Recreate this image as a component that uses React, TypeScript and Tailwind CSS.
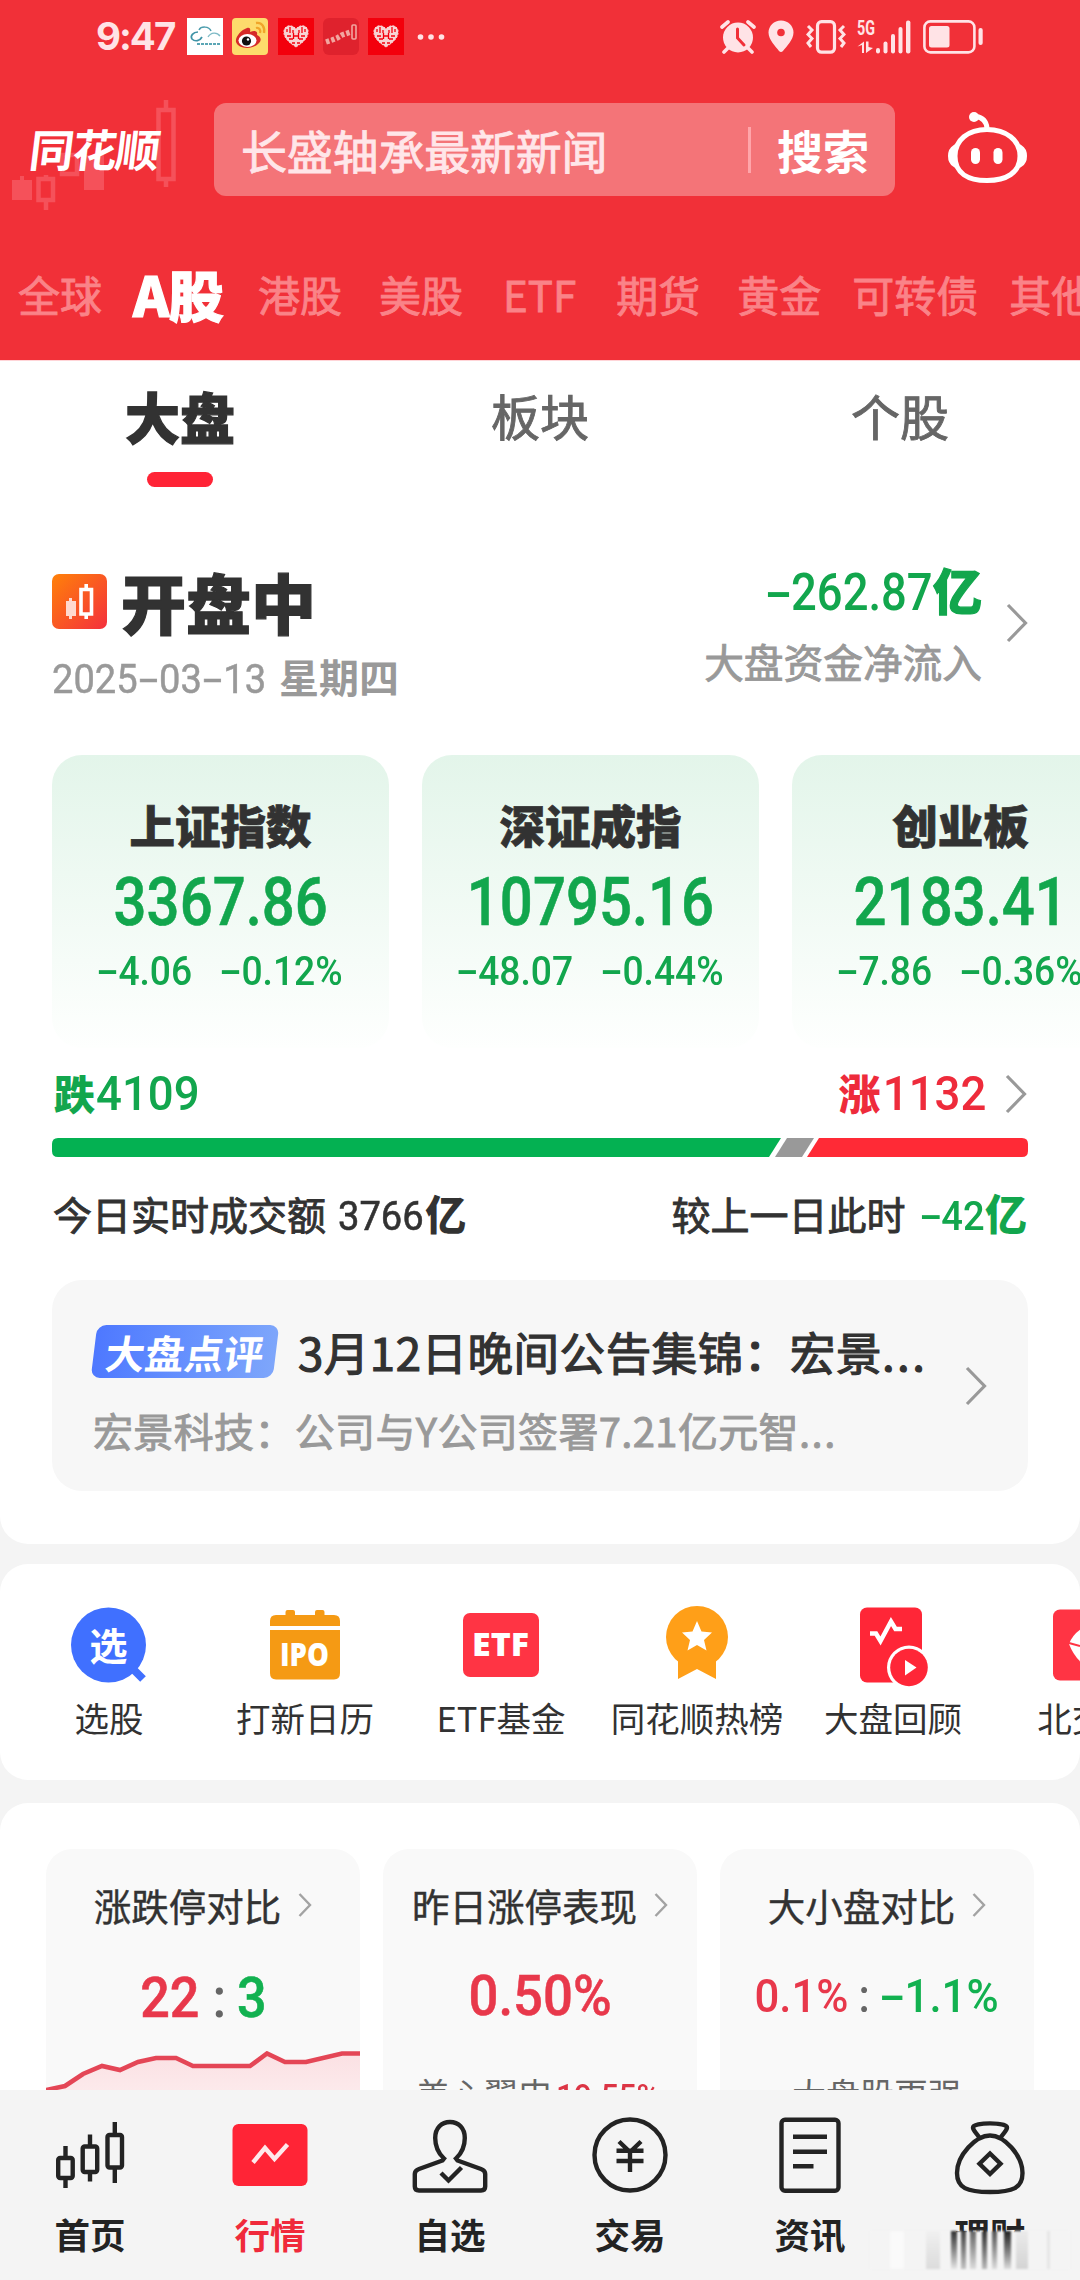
import type { ReactNode } from "react";
import clsx from "clsx";

// 中文字体只有常规和粗体两档，用描边补出中黑、特黑
const MEDIUM = "font-normal [-webkit-text-stroke:0.9px_currentColor]";
const HEAVY = "font-black [-webkit-text-stroke:1.2px_currentColor]";

/** 数字：Roboto 横向略压窄，负号占一个数字宽 */
function Num({
  children,
  className,
  scale = "scale-x-[0.93]",
}: {
  children: string;
  className?: string;
  scale?: string;
}) {
  return (
    <span
      className={clsx(
        "inline-block whitespace-pre font-['Roboto','Noto_Sans_CJK_SC',sans-serif]",
        scale,
        className,
      )}
    >
      {children.split(/(-)/).map((part, i) =>
        part === "-" ? (
          <span key={i} className="inline-block w-[0.56em] text-center">
            <span className="inline-block scale-x-[1.8]">-</span>
          </span>
        ) : (
          part
        ),
      )}
    </span>
  );
}

function Chevron({ small = false }: { small?: boolean }) {
  return small ? (
    <svg width="14" height="26" viewBox="0 0 14 26" fill="none" className="shrink-0">
      <path d="M1.5 2 L12 13 L1.5 24" stroke="#a3a3a3" strokeWidth="2.4" />
    </svg>
  ) : (
    <svg width="22" height="40" viewBox="0 0 22 40" fill="none" className="shrink-0">
      <path d="M2 2 L19.5 20 L2 38" stroke="#999" strokeWidth="3.2" />
    </svg>
  );
}

function HeartApp() {
  return (
    <svg width="36" height="37" viewBox="0 0 36 37">
      <rect width="36" height="37" fill="#f3000c" />
      <path
        d="M18 29 C10 24 5 19 6 12.5 C7 7 14 6 18 11 C22 6 29 7 30 12.5 C31 19 26 24 18 29Z"
        fill="#f8d3d3"
        stroke="#f8d3d3"
        strokeDasharray="2 1.4"
      />
      <path
        d="M9 11 v3 M12 9 v6 M15 12 v3 M21 12 v3 M24 9 v6 M27 11 v3 M9 18 h4 M23 18 h4 M11 21 h4 M21 21 h4 M14 25 h3 M19 25 h3 M15.500 15 v6 M20.500 15 v6 M16 18 h4"
        stroke="#f3000c"
        strokeWidth="1.3"
      />
    </svg>
  );
}

function StatusBar() {
  return (
    <div className="flex h-[73px] items-center pl-[96px] text-[#ffe3e6]">
      <span className="w-[91px] font-['Inter',sans-serif] text-[38.5px] leading-none font-bold tracking-[-2px]">
        9:47
      </span>
      <div className="flex w-[217px] shrink-0 justify-between">
        <svg width="36" height="37" viewBox="0 0 36 37" fill="none">
          <rect width="36" height="37" fill="#fff" />
          <path d="M12 12 C14 8 22 8 24 13" stroke="#4d9dad" strokeWidth="1.5" />
          <path d="M11 14 C6 14 3 18 5 21 C8 24 13 23 15 19" stroke="#3f93a6" strokeWidth="1.7" />
          <path d="M21 19 C24 14 30 14 33 18" stroke="#7ebac6" strokeWidth="1.4" />
          <path d="M10 26 h23" stroke="#5ba6b5" strokeWidth="1.8" strokeDasharray="3 1" />
        </svg>
        <svg width="36" height="37" viewBox="0 0 36 37">
          <rect width="36" height="37" rx="4" fill="#fddb6c" />
          <path d="M24 5 C30 4 33 9 32 15" stroke="#f0a52a" strokeWidth="2.4" fill="none" />
          <path d="M24 10 C27 9 29 12 28 15" stroke="#f0a52a" strokeWidth="2.2" fill="none" />
          <path
            d="M15 10 C9 12 3 19 4 24 C6 31 20 32 26 26 C31 22 28 18 25 17 C26 13 23 12 18 14 C19 10 17 9 15 10Z"
            fill="#d62a28"
          />
          <ellipse cx="15.500" cy="22.500" rx="9" ry="6.500" fill="#fff" />
          <circle cx="14.500" cy="23" r="4.600" fill="#111" />
          <circle cx="16" cy="21.500" r="1.200" fill="#fff" />
        </svg>
        <HeartApp />
        <svg width="36" height="37" viewBox="0 0 36 37" fill="none">
          <rect width="36" height="37" rx="6" fill="#df222d" />
          <path d="M3 24 L9 22 L14 20 L19 17 L28 14" stroke="#f2a6a0" strokeWidth="5.500" strokeDasharray="3.500 2" />
          <rect x="29" y="7" width="4" height="14" rx="1" stroke="#f2a6a0" strokeWidth="1.600" />
        </svg>
        <HeartApp />
      </div>
      <svg width="28" height="8" viewBox="0 0 28 8" fill="currentColor" className="ml-[13px] shrink-0">
        <circle cx="3.500" cy="4" r="2.800" />
        <circle cx="14" cy="4" r="2.800" />
        <circle cx="24.500" cy="4" r="2.800" />
      </svg>

      <svg width="36" height="34" viewBox="0 0 36 34" fill="none" className="ml-[275px] shrink-0">
        <circle cx="18" cy="17.500" r="15" fill="currentColor" />
        <path d="M2 7 L8 2 M34 7 L28 2 M8 28 L4 32 M28 28 L32 32" stroke="currentColor" strokeWidth="3.600" strokeLinecap="round" />
        <path d="M17.500 9 V18 L24 25" stroke="#f13038" strokeWidth="3" strokeLinecap="round" />
      </svg>
      <svg width="26" height="33" viewBox="0 0 26 33" className="ml-[12px] shrink-0">
        <path
          d="M13 0.500 C6 0.500 0.500 6 0.500 12.500 C0.500 20 8 27 11 31 Q13 33 15 31 C18 27 25.500 20 25.500 12.500 C25.500 6 20 0.500 13 0.500Z"
          fill="currentColor"
        />
        <circle cx="13" cy="12.500" r="3.800" fill="#f13038" />
      </svg>
      <svg width="40" height="34" viewBox="0 0 40 34" fill="none" stroke="currentColor" className="ml-[12px] shrink-0">
        <rect x="11.500" y="1.700" width="17" height="30.500" rx="4" strokeWidth="3.200" />
        <path d="M2 6 L6 10 L2 14.500 L6 18.500 L2 23 L5 27 M38 6 L34 10 L38 14.500 L34 18.500 L38 23 L35 27" strokeWidth="3" />
      </svg>
      <svg width="54" height="42" viewBox="0 -4 54 42" className="ml-[11px] shrink-0" fill="currentColor">
        <text
          x="0"
          y="15"
          fontFamily="Roboto, sans-serif"
          fontSize="20"
          fontWeight="700"
          textLength="18"
          lengthAdjust="spacingAndGlyphs"
        >
          5G
        </text>
        <path d="M5 33 V25 L0.500 26.500 L7 21.500 V33Z M9 21.500 V33 L16 28 L11.500 27 V21.500Z" />
        <rect x="19" y="28" width="4" height="5.500" rx="2" />
        <rect x="26.500" y="21.500" width="4" height="12" rx="2" />
        <rect x="34" y="14" width="4" height="19.500" rx="2" />
        <rect x="41.500" y="7" width="4" height="26.500" rx="2" />
        <rect x="49" y="0.500" width="4.400" height="33" rx="2" />
      </svg>
      <svg width="61" height="34" viewBox="0 0 61 34" className="ml-[12px] shrink-0" fill="none">
        <rect x="1.400" y="1.400" width="50" height="31" rx="6" stroke="currentColor" strokeWidth="2.600" />
        <rect x="6" y="6" width="20.500" height="21.500" rx="2.500" fill="currentColor" />
        <rect x="55.500" y="8" width="4.200" height="17" rx="2" fill="currentColor" />
      </svg>
    </div>
  );
}

const MARKETS = [
  { label: "全球", gap: "ml-[18px]" },
  { label: "A股", gap: "ml-[31px]", active: true },
  { label: "港股", gap: "ml-[31px]" },
  { label: "美股", gap: "ml-[37px]" },
  { label: "ETF", gap: "ml-[40px]" },
  { label: "期货", gap: "ml-[40px]" },
  { label: "黄金", gap: "ml-[37px]" },
  { label: "可转债", gap: "ml-[31px]" },
  { label: "其他", gap: "ml-[31px]" },
];

function Header() {
  return (
    <header className="h-[361px] border-b border-[#ffd5d8] bg-[#f13038]">
      <StatusBar />
      <div className="relative mt-[30px] flex h-[93px] items-center">
        <svg width="190" height="120" viewBox="0 0 190 120" className="absolute top-[-8px] left-0" fill="#f5515a">
          <path d="M12 85 H20 V81 H24 V85 H32 V105 H12Z" />
          <path d="M84 60 H104 V95 H84Z" />
          <g fill="none" stroke="#f5515a" strokeWidth="4.500">
            <path d="M38.500 84 H53 V105 H38.500Z M46 80 V84 M46 105 V115" />
            <path d="M62 60 H77 V79 H62Z" />
            <path d="M158.500 15 H173.500 V84 H158.500Z M166 5 V15 M166 84 V92" />
          </g>
        </svg>
        <div className="relative w-[214px] pl-[30px]">
          <span className="relative top-[-2px] inline-block origin-left -skew-x-[7deg] text-[44.5px] leading-[60px] font-bold tracking-[-1.4px] text-white">
            同花顺
          </span>
        </div>
        <div className="flex h-[93px] w-[681px] items-center rounded-[12px] bg-[#f47478] pr-[26px] pl-[27px] text-[46px] leading-[60px]">
          <span className={clsx("relative top-[-1px] flex-1 tracking-[-0.2px] text-[#ffe6e9]", MEDIUM)}>
            长盛轴承最新新闻
          </span>
          <span className="h-[46px] w-[3px] bg-[#ffa5aa]" />
          <span className="relative top-[-1px] ml-[26px] font-bold text-white">搜索</span>
        </div>
        <svg width="80" height="74" viewBox="0 0 80 74" fill="none" className="mt-[-4px] ml-[52px]">
          <path
            d="M40 18.500 C59 18.500 73 29 73 45 C73 62 59 69.500 40 69.500 C21 69.500 8 62 8 45 C8 29 21 18.500 40 18.500Z"
            stroke="#fff"
            strokeWidth="5"
          />
          <path d="M7 35 Q2 38 2 45 Q2 52 7 55Z M74 35 Q79 38 79 45 Q79 52 74 55Z" fill="#fff" stroke="#fff" strokeWidth="2" />
          <path d="M40 17 Q39 7 29 5.500" stroke="#fff" strokeWidth="5" />
          <circle cx="27" cy="6" r="5" fill="#fff" />
          <rect x="24" y="37" width="9" height="16" rx="4.500" fill="#fff" />
          <rect x="46.500" y="37" width="9" height="16" rx="4.500" fill="#fff" />
        </svg>
      </div>
      <nav className="mt-[47px] flex h-[100px] items-center overflow-hidden whitespace-nowrap">
        {MARKETS.map((m) => (
          <span
            key={m.label}
            className={clsx(
              "shrink-0",
              m.gap,
              m.active ? "w-[94px] text-[55px] tracking-[-0.5px] text-white" : "text-[42px] text-[#fa8388]",
              m.active ? HEAVY : MEDIUM,
            )}
          >
            {m.label}
          </span>
        ))}
      </nav>
    </header>
  );
}

function SubTabs() {
  return (
    <div className="grid h-[126px] grid-cols-3 text-center">
      <div className="flex flex-col items-center">
        <span className={clsx("h-[111px] text-[55px] leading-[109px] text-[#323232]", HEAVY)}>大盘</span>
        <span className="h-[15px] w-[66px] rounded-full bg-[#ff2436]" />
      </div>
      <span className={clsx("text-[49px] leading-[108px] text-[#666]", MEDIUM)}>板块</span>
      <span className={clsx("text-[49px] leading-[108px] text-[#666]", MEDIUM)}>个股</span>
    </div>
  );
}

const INDICES = [
  { name: "上证指数", value: "3367.86", diff: "-4.06", pct: "-0.12%" },
  { name: "深证成指", value: "10795.16", diff: "-48.07", pct: "-0.44%" },
  { name: "创业板", value: "2183.41", diff: "-7.86", pct: "-0.36%" },
];

function MarketPanel() {
  return (
    <section className="h-[1183px] overflow-hidden rounded-b-[28px] bg-white pl-[52px]">
      <div className="-ml-[52px]">
        <SubTabs />
      </div>

      <div className="mt-[70px] flex h-[156px] justify-between pr-[52px]">
        <div>
          <div className="flex h-[88px] items-center">
            <svg width="55" height="55" viewBox="0 0 55 55">
              <defs>
                <linearGradient id="open" x1="0" y1="0" x2="1" y2="1">
                  <stop offset="0" stopColor="#ff8109" />
                  <stop offset="1" stopColor="#f4303d" />
                </linearGradient>
              </defs>
              <rect width="55" height="55" rx="7" fill="url(#open)" />
              <path d="M14 27 H17 V24 H20 V27 H24 V42 H20 V45 H17 V42 H14Z" fill="#ffd9cf" />
              <path d="M29 15.500 H39.500 V40 H29Z M34.200 10 V15 M34.200 40 V45" stroke="#fff" strokeWidth="3.600" fill="none" />
            </svg>
            <span className={clsx("ml-[14px] text-[65px] leading-[88px] text-[#323232]", HEAVY)}>开盘中</span>
          </div>
          <div className="mt-[6px] flex items-baseline text-[#999]">
            <Num className="w-[227px] origin-left text-[41px] leading-[50px] [-webkit-text-stroke:0.5px_currentColor]">
              2025-03-13
            </Num>
            <span className="text-[40px] leading-[50px] font-bold">星期四</span>
          </div>
        </div>
        <div className="flex items-center">
          <div className="mr-[24px] h-full text-right">
            <div className="flex h-[66px] items-baseline justify-end text-[#12a64d]">
              <Num className="origin-right text-[51px] leading-[64px] font-medium" scale="scale-x-[0.89]">
                -262.87
              </Num>
              <span className={clsx("text-[49px] leading-[64px]", HEAVY)}>亿</span>
            </div>
            <div className={clsx("mt-[10px] text-[39.700px] leading-[56px] text-[#999]", MEDIUM)}>大盘资金净流入</div>
          </div>
          <div className="mb-[24px]">
            <Chevron />
          </div>
        </div>
      </div>

      <div className="mt-[42px] flex gap-[33px]">
        {INDICES.map((item) => (
          <div
            key={item.name}
            className="flex h-[293px] w-[337px] shrink-0 flex-col items-center rounded-[30px] bg-linear-to-b from-[#e3f5ea] to-[#fefffe] pt-[39px] text-[#12a64d]"
          >
            <span className="text-[45.500px] leading-[60px] font-black text-[#323232] [-webkit-text-stroke:0.8px_currentColor]">
              {item.name}
            </span>
            <Num
              className="mt-[8px] text-[66px] leading-[82px] font-medium [-webkit-text-stroke:0.6px_currentColor]"
              scale="scale-x-[0.88]"
            >
              {item.value}
            </Num>
            <div className="mt-[2px] flex gap-[20px]">
              <Num className="text-[40px] leading-[52px] font-medium">{item.diff}</Num>
              <Num className="text-[40px] leading-[52px] font-medium">{item.pct}</Num>
            </div>
          </div>
        ))}
      </div>

      <div className="flex h-[90px] items-center justify-between pt-[2px] pr-[53px]">
        <div className="flex items-baseline text-[#12a64d]">
          <span className="ml-[2px] text-[41px] font-black">跌</span>
          <Num className="ml-[1px] origin-left text-[49px] font-medium">4109</Num>
        </div>
        <div className="flex items-center text-[#ee2b3b]">
          <div className="mr-[19px] flex items-baseline">
            <span className="mr-[-6px] text-[42px] font-black">涨</span>
            <Num className="origin-right text-[49px] font-medium">1132</Num>
          </div>
          <Chevron />
        </div>
      </div>

      <svg width="976" height="19" viewBox="0 0 976 19">
        <path d="M6 0 H729 L717 19 H6 Q0 19 0 13 V6 Q0 0 6 0Z" fill="#04b152" />
        <path d="M735 0 H762 L750 19 H723Z" fill="#999" />
        <path d="M767 0 H970 Q976 0 976 6 V13 Q976 19 970 19 H755Z" fill="#ff2a36" />
      </svg>

      <div className="mt-[23px] flex h-[64px] items-baseline justify-between pr-[53px] text-[39px] leading-[64px] text-[#323232]">
        <div className="flex items-baseline">
          <span className={clsx("ml-[1px] w-[285px]", MEDIUM)}>今日实时成交额</span>
          <Num className="mr-[-5px] origin-left text-[41px] [-webkit-text-stroke:0.6px_currentColor]">3766</Num>
          <span className="text-[41px] font-black">亿</span>
        </div>
        <div className="flex items-baseline">
          <span className={MEDIUM}>较上一日此时</span>
          <Num className="ml-[10px] origin-right text-[41px] font-medium text-[#12a64d]">-42</Num>
          <span className="text-[42px] font-black text-[#12a64d]">亿</span>
        </div>
      </div>

      <div className="mt-[36px] flex h-[211px] w-[976px] items-center rounded-[30px] bg-[#f7f7f7] pr-[41px] pl-[41px]">
        <div className="h-full flex-1 pt-[36px]">
          <div className="flex h-[70px] items-center whitespace-nowrap">
            <span className="ml-[1px] flex h-[53px] w-[182px] -skew-x-[7deg] items-center justify-center rounded-[9px] bg-linear-to-r from-[#4e78ff] to-[#7ea6fb] text-[39.500px] leading-[53px] font-bold text-white">
              大盘点评
            </span>
            <span
              className={clsx(
                "ml-[22px] text-[45.500px] leading-[70px] tracking-[0.55px] text-[#323232] [-webkit-text-stroke:1.2px_currentColor]",
              )}
            >
              3月12日晚间公告集锦：宏景<span className="tracking-[2.5px]">...</span>
            </span>
          </div>
          <div className={clsx("mt-[14px] text-[40px] leading-[60px] tracking-[0.35px] text-[#999]", MEDIUM)}>
            宏景科技：公司与Y公司签署7.21亿元智<span className="tracking-[1.5px]">...</span>
          </div>
        </div>
        <Chevron />
      </div>
    </section>
  );
}

function QuickIcon({ children }: { children: ReactNode }) {
  return (
    <svg width="90" height="90" viewBox="0 0 90 90" className="shrink-0">
      {children}
    </svg>
  );
}

const SHORTCUTS = [
  {
    label: "选股",
    icon: (
      <>
        <circle cx="44.500" cy="45" r="37.500" fill="#4070ff" />
        <path d="M68 68 L79 79" stroke="#4070ff" strokeWidth="8" />
        <text x="44.500" y="59.500" fontSize="38" fontWeight="700" textAnchor="middle" fill="#fff">
          选
        </text>
      </>
    ),
  },
  {
    label: "打新日历",
    icon: (
      <>
        <path d="M25.500 15 V12 Q25.500 10 27.500 10 H33 Q35 10 35 12 V15 H55 V12 Q55 10 57 10 H62.500 Q64.500 10 64.500 12 V15 H74 Q80 15 80 21 V26 H10 V21 Q10 15 16 15Z" fill="#f59a14" />
        <path d="M10 30 H80 V73 Q80 79.500 74 79.500 H16 Q10 79.500 10 73Z" fill="#f59a14" />
        <text x="20" y="66" fontFamily="Open Sans" fontSize="31" fontWeight="800" textLength="49" lengthAdjust="spacingAndGlyphs" fill="#fff">
          IPO
        </text>
      </>
    ),
  },
  {
    label: "ETF基金",
    icon: (
      <>
        <rect x="7" y="13" width="76" height="64" rx="7" fill="#ff3444" />
        <text x="16" y="56" fontFamily="Open Sans" fontSize="31" fontWeight="800" textLength="57" lengthAdjust="spacingAndGlyphs" fill="#fff">
          ETF
        </text>
      </>
    ),
  },
  {
    label: "同花顺热榜",
    icon: (
      <>
        <circle cx="45" cy="37" r="31" fill="#ff9f18" />
        <path d="M26 55 H64 V79 L45 69 L26 79Z" fill="#ff9f18" />
        <path d="M45 21 L49.500 31.500 L60 32.500 L52 40 L54.500 50.500 L45 45 L35.500 50.500 L38 40 L30 32.500 L40.500 31.500Z" fill="#fff" />
      </>
    ),
  },
  {
    label: "大盘回顾",
    icon: (
      <>
        <rect x="12" y="7.500" width="62" height="75" rx="7" fill="#ff2637" />
        <path d="M22 33.500 H28 L32.500 41 L43 21.500 L47.500 29 H54" stroke="#fff" strokeWidth="4.500" fill="none" />
        <circle cx="61" cy="67.500" r="22" fill="#fff" />
        <circle cx="61" cy="67.500" r="18.800" fill="#ff2637" />
        <path d="M57 60 L68.500 67.500 L57 75.500Z" fill="#fff" />
      </>
    ),
  },
  {
    label: "北交所",
    icon: (
      <>
        <rect x="9" y="9.500" width="72" height="71" rx="7" fill="#ff3444" />
        <path d="M25 44 Q30 31 45 25 Q60 31 65 44 Q60 58 45 68 Q31 60 25 44Z" fill="#fff" />
        <path d="M25 43 L36 46" stroke="#ff3444" strokeWidth="2" />
        <circle cx="47" cy="45" r="9" fill="#ff3444" />
      </>
    ),
  },
];

function Shortcuts() {
  return (
    <section className="mt-[20px] flex h-[216px] overflow-hidden rounded-[28px] bg-white pt-[36px] pl-[11px]">
      {SHORTCUTS.map((s) => (
        <div key={s.label} className="flex w-[196px] shrink-0 flex-col items-center">
          <QuickIcon>{s.icon}</QuickIcon>
          <span className="mt-[2px] text-[34.500px] leading-[50px] whitespace-nowrap text-[#323232]">{s.label}</span>
        </div>
      ))}
    </section>
  );
}

function StatCard({ title, children }: { title: string; children: ReactNode }) {
  return (
    <div className="flex h-[300px] w-[314px] shrink-0 flex-col items-center rounded-[26px] bg-[#f9f9f9] pt-[28px]">
      <div className="flex h-[56px] items-center gap-[17px] text-[37.500px] text-[#323232]">
        <span className="[-webkit-text-stroke:0.4px_currentColor]">{title}</span>
        <Chevron small />
      </div>
      {children}
    </div>
  );
}

const TREND = "0,39 19,35 37,23 56,15 74,19 92,11 110,7 130,7 147,15 204,15 221,2.500 239,11 260,11 296,2.500 314,2.500";

function Stats() {
  return (
    <section className="mt-[23px] flex h-[287px] gap-[23px] overflow-hidden rounded-t-[28px] bg-white pt-[46px] pl-[46px]">
      <StatCard title="涨跌停对比">
        <div className="mt-[31px] flex h-[68px] items-baseline text-[56px] leading-[68px]">
          <Num className="font-medium text-[#e8384b] [-webkit-text-stroke:0.6px_currentColor]">22</Num>
          <Num className="mx-[10px] font-medium text-[#666]">:</Num>
          <Num className="font-medium text-[#12b150] [-webkit-text-stroke:0.6px_currentColor]">3</Num>
        </div>
        <svg width="314" height="60" viewBox="0 0 314 60" className="mt-[19px] shrink-0">
          <defs>
            <linearGradient id="trend" x1="0" y1="0" x2="0" y2="1">
              <stop offset="0" stopColor="#fbe0e3" />
              <stop offset="1" stopColor="#fdeff0" />
            </linearGradient>
          </defs>
          <polygon points={`${TREND} 314,60 0,60`} fill="url(#trend)" />
          <polyline points={TREND} fill="none" stroke="#e44656" strokeWidth="4.600" />
        </svg>
      </StatCard>
      <StatCard title="昨日涨停表现">
        <Num
          className="mt-[29px] h-[68px] text-[56px] leading-[68px] font-medium text-[#e8384b] [-webkit-text-stroke:0.5px_currentColor]"
          scale="scale-x-[0.94]"
        >
          0.50%
        </Num>
        <div className="mt-[39px] flex items-baseline text-[34px] leading-[50px] text-[#666]">
          美心翼申<Num className="font-medium text-[#dc3545]">19.55%</Num>
        </div>
      </StatCard>
      <StatCard title="大小盘对比">
        <div className="mt-[29px] flex h-[68px] items-baseline text-[46px] leading-[68px]">
          <Num className="font-medium text-[#e8384b]" scale="scale-x-[0.95]">
            0.1%
          </Num>
          <Num className="mx-[7px] font-medium text-[#666]">:</Num>
          <Num className="font-medium text-[#12b150]" scale="scale-x-[0.95]">
            -1.1%
          </Num>
        </div>
        <div className="mt-[39px] text-[34px] leading-[50px] text-[#666]">大盘股更强</div>
      </StatCard>
    </section>
  );
}

const NAV = [
  {
    label: "首页",
    icon: (
      <>
        <rect x="13.200" y="48" width="14.500" height="20" rx="2" />
        <path d="M20.500 36 V47 M20.500 69 V78" />
        <rect x="37.700" y="36.500" width="14.500" height="25.500" rx="2" />
        <path d="M45 24.500 V36 M45 62 V71.500" />
        <rect x="62.500" y="25" width="14.500" height="32.500" rx="2" />
        <path d="M69.800 12 V24 M69.800 58 V73" />
      </>
    ),
  },
  {
    label: "行情",
    active: true,
    icon: (
      <>
        <rect x="7.500" y="14" width="75" height="62" rx="6" fill="#ff2436" stroke="none" />
        <path d="M28 52.500 L40 38 L49.500 49 L62.500 34.500" stroke="#ffe9eb" />
      </>
    ),
  },
  {
    label: "自选",
    icon: (
      <>
        <path d="M39 48.500 C33 43 30.200 37 30.200 28 C30.200 18 36.500 12 45 12 C53.500 12 59.800 18 59.800 28 C59.800 37 57 43 51 48.500 L52.500 50.500 L76 59 Q80.200 60.500 80.200 64 V76.500 Q80.200 80.500 76 80.500 H14 Q9.800 80.500 9.800 76.500 V64 Q9.800 60.500 14 59 L37.500 50.500 Z" />
        <path d="M36 63 L43.500 70.500 L56.500 57.500" />
      </>
    ),
  },
  {
    label: "交易",
    icon: (
      <>
        <circle cx="45" cy="45" r="35.500" />
        <path d="M34 31.500 L45 42 L56 31.500 M45 42 V62 M31.500 40.700 H58.500 M31.500 51 H58.500" />
      </>
    ),
  },
  {
    label: "资讯",
    icon: (
      <>
        <rect x="16.500" y="9.700" width="57" height="71" rx="3.500" />
        <path d="M28 26.700 H62 M28 41.700 H62 M28 56.300 H48.500" />
      </>
    ),
  },
  {
    label: "理财",
    icon: (
      <>
        <path d="M34.500 28 C32 23 28 21 28 17.500 C28 12 62 12 62 17.500 C62 21 58 23 55.500 28" />
        <path d="M45 25.500 C31 25.500 12 45 12 63 C12 78 22 82 45 82 C68 82 77.500 78 77.500 63 C77.500 45 59 25.500 45 25.500Z" />
        <path d="M45 43.500 L55.500 53.700 L45 64 L34.500 53.700Z" />
      </>
    ),
  },
];

const SMEAR = [
  "w-[14px] ml-[20px] bg-[#fafafa]",
  "w-[14px] ml-[22px] bg-linear-to-b from-[#f0f0f0] to-[#dcdcdc]",
  "w-[6px] ml-[11px] bg-linear-to-b from-[#333] to-[#e6e6e6]",
  "w-[5px] ml-[4px] bg-linear-to-b from-[#444] to-[#c4c4c4]",
  "w-[6px] ml-[4px] bg-linear-to-b from-[#666] to-[#ddd]",
  "w-[5px] ml-[6px] bg-linear-to-b from-[#333] to-[#bbb]",
  "w-[5px] ml-[5px] bg-linear-to-b from-[#555] to-[#ddd]",
  "w-[7px] ml-[7px] bg-linear-to-b from-[#222] to-[#ddd]",
  "w-[12px] ml-[5px] bg-linear-to-b from-[#ebebeb] to-[#d4d4d4]",
  "w-[3px] ml-[19px] bg-[#e6e6e6]",
];

function BottomNav() {
  return (
    <nav className="relative grid h-[190px] grid-cols-6 bg-[#f4f4f4] pt-[20px]">
      {NAV.map((item) => (
        <div key={item.label} className="flex flex-col items-center">
          <svg width="90" height="90" viewBox="0 0 90 90" fill="none" stroke="#232323" strokeWidth="4.400">
            {item.icon}
          </svg>
          <span
            className={clsx(
              "mt-[9px] text-[35.500px] leading-[50px] font-bold",
              item.active ? "text-[#f02a3b]" : "text-[#232323]",
            )}
          >
            {item.label}
          </span>
        </div>
      ))}
      <div className="absolute top-[141px] left-[870px] flex h-[38px] w-[200px] bg-[#f4f4f4] blur-[1px]">
        {SMEAR.map((bar, i) => (
          <span key={i} className={clsx("h-full shrink-0", bar)} />
        ))}
      </div>
    </nav>
  );
}

export default function App() {
  return (
    <div className="h-[2280px] w-[1080px] overflow-hidden bg-[#f4f4f4] font-['Noto_Sans_CJK_SC',sans-serif]">
      <Header />
      <MarketPanel />
      <Shortcuts />
      <Stats />
      <BottomNav />
    </div>
  );
}
